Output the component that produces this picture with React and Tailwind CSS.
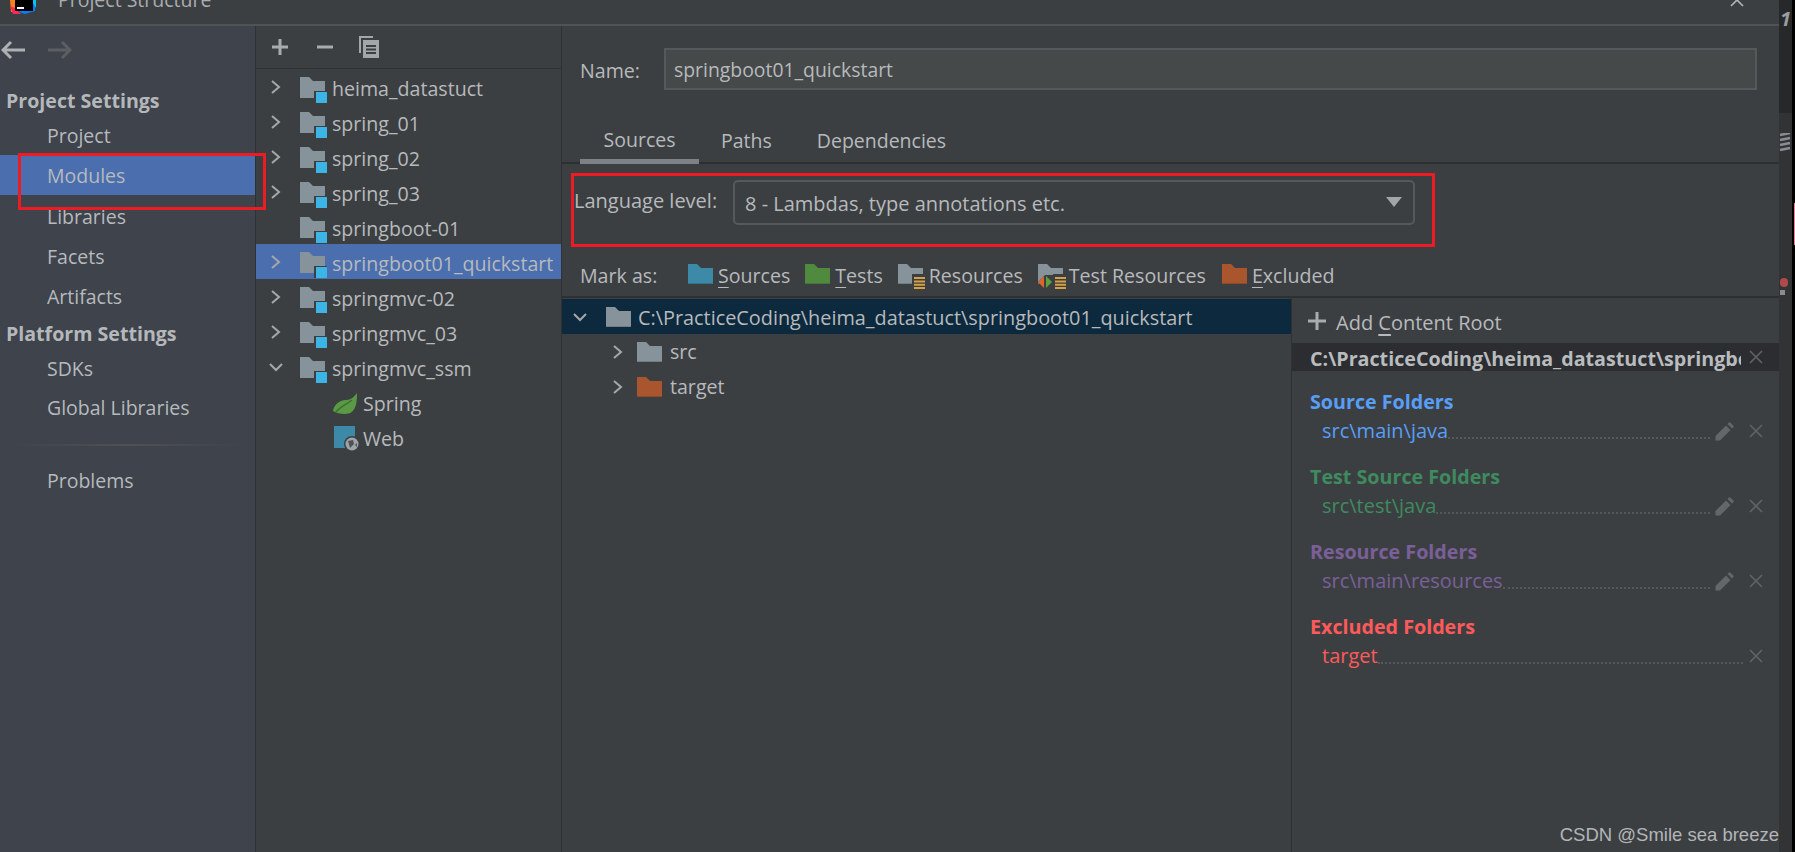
import React from "react";

const T = "#b7babc";

function Folder({ color = "#87939a", className = "" }) {
  return (
    <svg width="25" height="20" viewBox="0 0 25 20" className={`shrink-0 ${className}`}>
      <path d="M0 0H9L13 4H25V20H0Z" fill={color} />
      <path d="M0 19H25V20H0Z" fill="#000" opacity="0.15" />
    </svg>
  );
}

function Module() {
  return (
    <svg width="27" height="26" viewBox="0 0 27 26" className="mt-[6px] shrink-0">
      <path d="M0 0H9L13 4H25V21H0Z" fill="#87939a" />
      <path d="M14 14H27V26H14Z" fill="#3c3f42" />
      <path d="M16 15H27V26H16Z" fill="#3cb5e6" />
    </svg>
  );
}

function Chev({ open }) {
  return (
    <svg width="14" height="16" viewBox="0 0 14 16" className="shrink-0">
      <path d={open ? "M1 5L7 11L13 5" : "M3 2L10 8L3 14"} fill="none" stroke="#a5a8aa" strokeWidth="2" />
    </svg>
  );
}

function Close({ color = "#5f6366" }) {
  return (
    <svg width="16" height="16" viewBox="0 0 16 16" className="shrink-0">
      <path d="M2 2L14 14M14 2L2 14" stroke={color} strokeWidth="1.7" />
    </svg>
  );
}

function Pencil() {
  return (
    <svg width="19" height="19" viewBox="0 0 19 19" className="shrink-0">
      <path d="M0.5 18.5V14L11 3.5L15.5 8L5 18.5Z M12.5 2L14 0.5Q14.6 0 15.2 0.5L18.5 3.8Q19 4.4 18.5 5L17 6.5Z" fill="#63676a" />
    </svg>
  );
}

function ResLines() {
  return (
    <svg width="13" height="15" viewBox="0 0 13 15" className="absolute right-[-2px] bottom-[-5px]">
      <rect x="0" y="0" width="13" height="15" fill="#3c3f42" />
      <path d="M2 3H13V5H2ZM2 6.4H13V8.4H2ZM2 9.8H13V11.8H2ZM2 13H13V15H2Z" fill="#d5a046" />
    </svg>
  );
}

function TreeRow({ label, open, leaf, selected }) {
  return (
    <div className={`flex h-[35px] items-center pl-[13px] text-[19.6px] ${selected ? "bg-[#4b6eaf]" : ""}`}>
      <div className="w-[31px] shrink-0">{!leaf && <Chev open={open} />}</div>
      <Module />
      <span className="ml-[5px] mt-[4px] whitespace-nowrap">{label}</span>
    </div>
  );
}

function Mark({ icon, letter, rest, ml, tl = "5px" }) {
  return (
    <div className="flex items-center" style={{ marginLeft: ml }}>
      {icon}
      <span className="mt-[4px] whitespace-nowrap" style={{ marginLeft: tl }}>
        {letter && <span className="underline underline-offset-[4px]">{letter}</span>}
        {rest}
      </span>
    </div>
  );
}

function PathRow({ title, path, color, editable = true }) {
  return (
    <div className="h-[75px] pl-[18px]" style={{ color }}>
      <div className="flex h-[30px] items-center pt-[2px] text-[19.7px] font-bold">{title}</div>
      <div className="flex h-[30px] items-center pl-[12px]">
        <span className="text-[20px]">{path}</span>
        <div className="mr-[5px] h-[16px] flex-1 border-b-2 border-dotted border-[#55595c]" />
        {editable && <div className="mr-[14px]"><Pencil /></div>}
        <div className="mr-[15px]"><Close /></div>
      </div>
    </div>
  );
}

function SideItem({ children, h = "h-[40px]", selected }) {
  return (
    <div className={`flex ${h} items-center pl-[47px] pt-[2px] text-[19.5px] ${selected ? "bg-[#4b6eaf]" : ""}`}>{children}</div>
  );
}

export default function App() {
  return (
    <div
      className="relative flex h-[852px] w-[1795px] overflow-hidden bg-[#3c3f42] text-[19.6px]"
      style={{ fontFamily: '"Open Sans", "Noto Sans", sans-serif', color: T }}
    >
      <div className="flex w-[1779px] shrink-0 flex-col">
        {/* title bar */}
        <div className="relative flex h-[26px] shrink-0 items-start overflow-hidden border-b-2 border-[#505254] bg-[#3c3f41]">
          <svg width="28" height="14" viewBox="0 0 28 14" className="ml-[9px] shrink-0">
            <path d="M1 0H8L6 12H2Z" fill="#fc801d" />
            <path d="M1 6L4 14H12L6 8Z" fill="#fe2857" />
            <path d="M20 0H27L26 11L16 14L10 12Z" fill="#087cfa" />
            <path d="M22 0H27V8Z" fill="#07c3f2" />
            <rect x="6" y="0" width="18" height="11" fill="#000" />
            <rect x="8" y="7" width="7" height="2" fill="#fff" />
          </svg>
          <span className="ml-[21px] mt-[-14px] text-[19.5px] leading-[28px] text-[#a9adb0]">Project Structure</span>
          <div className="ml-auto mr-[34px] mt-[-8px]">
            <Close color="#b0b3b5" />
          </div>
        </div>

        <div className="flex min-h-0 flex-1">
          {/* sidebar */}
          <div className="w-[256px] shrink-0 border-r border-[#2f3133] bg-[#3e434c]">
            <div className="flex h-[48px] items-center pl-[1px]">
              <svg width="24" height="20" viewBox="0 0 24 20">
                <path d="M10 2L2 10L10 18M2 10H24" fill="none" stroke="#aeb1b3" strokeWidth="3" />
              </svg>
              <svg width="24" height="20" viewBox="0 0 24 20" className="ml-[23px]">
                <path d="M14 2L22 10L14 18M0 10H22" fill="none" stroke="#5c5f62" strokeWidth="3" />
              </svg>
            </div>
            <div className="mt-[12px] flex h-[29px] items-center pl-[6px] text-[19.6px] font-bold text-[#b5b8ba]">Project Settings</div>
            <SideItem>Project</SideItem>
            <SideItem selected>Modules</SideItem>
            <SideItem h="h-[41px]">Libraries</SideItem>
            <SideItem>Facets</SideItem>
            <SideItem>Artifacts</SideItem>
            <div className="flex h-[35px] items-center pl-[6px] text-[19.6px] font-bold text-[#b5b8ba]">Platform Settings</div>
            <SideItem h="h-[34px]">SDKs</SideItem>
            <SideItem h="h-[44px]">Global Libraries</SideItem>
            <div className="mx-[6px] mb-[16px] mt-[15px] h-[2px] bg-gradient-to-r from-[#3e434c] via-[#4f5154] to-[#3e434c]" />
            <SideItem h="h-[36px]">Problems</SideItem>
          </div>

          {/* modules list */}
          <div className="w-[306px] shrink-0 overflow-hidden border-r border-[#2f3133] bg-[#3c3f42]">
            <div className="flex h-[43px] items-center gap-[25px] border-b border-[#2f3133] pl-[14px]">
              <svg width="20" height="20" viewBox="0 0 20 20">
                <path d="M10 2V18M2 10H18" stroke="#a9acae" strokeWidth="3" />
              </svg>
              <svg width="20" height="20" viewBox="0 0 20 20">
                <path d="M2 10H18" stroke="#a9acae" strokeWidth="3" />
              </svg>
              <svg width="22" height="24" viewBox="0 0 22 24" className="ml-[-2px]">
                <path d="M1 1H15V3H3V18H1Z" fill="#a3a6a8" />
                <path d="M5 5H21V23H5Z" fill="#a3a6a8" />
                <path d="M8 10H18V12H8ZM8 13.5H18V15.5H8ZM8 17H18V19H8Z" fill="#3c3f42" />
              </svg>
            </div>
            <TreeRow label="heima_datastuct" />
            <TreeRow label="spring_01" />
            <TreeRow label="spring_02" />
            <TreeRow label="spring_03" />
            <TreeRow label="springboot-01" leaf />
            <TreeRow label="springboot01_quickstart" selected />
            <TreeRow label="springmvc-02" />
            <TreeRow label="springmvc_03" />
            <TreeRow label="springmvc_ssm" open />
            <div className="flex h-[35px] items-center pl-[76px]">
              <svg width="26" height="22" viewBox="0 0 26 22" className="mt-[4px] shrink-0">
                <path d="M25 0C25 10 24 21 13 21C8 21 4 20 1 18C2 12 7 7 14 7C19 7 22 4 25 0Z" fill="#5a9a45" />
                <path d="M4 19C9 13 15 11 20 7" fill="none" stroke="#3c6f32" strokeWidth="1.4" />
              </svg>
              <span className="ml-[5px] mt-[4px]">Spring</span>
            </div>
            <div className="flex h-[35px] items-center pl-[78px]">
              <svg width="26" height="26" viewBox="0 0 26 26" className="mt-[4px] shrink-0">
                <rect x="0" y="0" width="21" height="22" fill="#3d8aa8" />
                <circle cx="18" cy="18" r="8" fill="#3c3f42" />
                <circle cx="18" cy="18" r="6.5" fill="#9ea4a8" />
                <path d="M14 15L19 14L20 18L16 22ZM21 19L23 17V21Z" fill="#4d5256" />
              </svg>
              <span className="ml-[3px] mt-[4px]">Web</span>
            </div>
          </div>

          {/* details */}
          <div className="flex min-w-0 flex-1 flex-col">
            <div className="flex h-[64px] shrink-0 items-end pl-[18px]">
              <span className="mb-[5px] w-[84px]">Name:</span>
              <div className="mr-[22px] flex h-[42px] flex-1 items-center border-2 border-[#56595b] bg-[#45494a] pl-[8px] pt-[2px] text-[19.4px]">
                springboot01_quickstart
              </div>
            </div>
            <div className="mt-[24px] flex h-[50px] shrink-0 border-b-2 border-[#2d2f31] pl-[18px] text-[19.5px]">
              <div className="flex h-[50px] w-[119px] items-center justify-center border-b-[5px] border-[#7d8286] pt-[6px]">Sources</div>
              <div className="ml-[22px] flex h-[48px] items-center pt-[5px]">Paths</div>
              <div className="ml-[45px] flex h-[48px] items-center pt-[5px]">Dependencies</div>
            </div>
            <div className="flex h-[90px] shrink-0 items-start pl-[12px] pt-[16px] text-[20px]">
              <span className="mt-[6px] w-[159px] shrink-0">Language level:</span>
              <div className="flex h-[45px] w-[682px] items-center justify-between rounded-[5px] border-2 border-[#56595b] pl-[10px] pr-[11px] pt-[2px]">
                <span>8 - Lambdas, type annotations etc.</span>
                <svg width="16" height="10" viewBox="0 0 16 10" className="mt-[-4px]">
                  <path d="M0 0H16L8 10Z" fill="#a3a6a8" />
                </svg>
              </div>
            </div>
            <div className="flex h-[44px] shrink-0 items-center border-b-2 border-[#2d2f31] pb-[2px] pl-[18px]">
              <span className="mt-[4px] w-[108px] shrink-0">Mark as:</span>
              <Mark icon={<Folder color="#3d8aa8" />} letter="S" rest="ources" />
              <Mark icon={<Folder color="#4f8a3f" />} letter="T" rest="ests" ml="15px" />
              <Mark
                ml="15px"
                tl="6px"
                icon={<div className="relative h-[20px] w-[25px]"><Folder /><ResLines /></div>}
                rest="Resources"
              />
              <Mark
                ml="15px"
                tl="5px"
                icon={
                  <div className="relative h-[20px] w-[26px]">
                    <Folder />
                    <ResLines />
                    <svg width="15" height="14" viewBox="0 0 15 14" className="absolute bottom-[-5px] left-0">
                      <path d="M0 7L7 0H15L15 14H7Z" fill="#3c3f42" />
                      <path d="M6 1V13L0 7Z" fill="#e0652b" />
                      <path d="M8 1V13L14 7Z" fill="#5ba338" />
                    </svg>
                  </div>
                }
                rest="Test Resources"
              />
              <Mark icon={<Folder color="#a9562e" />} letter="E" rest="xcluded" ml="16px" />
            </div>

            <div className="flex min-h-0 flex-1">
              <div className="min-w-0 flex-1 border-r border-[#2f3133] pt-[1px]">
                <div className="flex h-[35px] items-center bg-[#0d293e] pl-[11px]">
                  <Chev open />
                  <Folder className="ml-[19px]" />
                  <span className="ml-[7px] mt-[2px] whitespace-nowrap text-[19.85px]">C:\PracticeCoding\heima_datastuct\springboot01_quickstart</span>
                </div>
                <div className="flex h-[35px] items-center pl-[49px]">
                  <Chev />
                  <Folder className="ml-[12px]" />
                  <span className="ml-[8px] mt-[1px]">src</span>
                </div>
                <div className="flex h-[35px] items-center pl-[49px]">
                  <Chev />
                  <Folder color="#a9562e" className="ml-[12px]" />
                  <span className="ml-[8px] mt-[1px]">target</span>
                </div>
              </div>
              <div className="w-[487px] shrink-0">
                <div className="flex h-[45px] items-center pl-[16px]">
                  <svg width="18" height="18" viewBox="0 0 18 18" className="shrink-0">
                    <path d="M9 0V18M0 9H18" stroke="#a9acae" strokeWidth="3" />
                  </svg>
                  <span className="ml-[10px] mt-[5px] text-[20px]">Add <span className="underline underline-offset-[4px]">C</span>ontent Root</span>
                </div>
                <div className="flex h-[28px] items-center bg-[#2b2d30] pl-[18px]">
                  <div className="min-w-0 flex-1 overflow-hidden whitespace-nowrap pt-[3px] text-[19.7px] font-bold leading-[26px] text-[#b9bcbe]">
                    C:\PracticeCoding\heima_datastuct\springboot01_quickstart
                  </div>
                  <div className="ml-[7px] mr-[15px]"><Close /></div>
                </div>
                <div className="mt-[15px]">
                  <PathRow title="Source Folders" path="src\main\java" color="#589df6" />
                  <PathRow title="Test Source Folders" path="src\test\java" color="#3f8a5f" />
                  <PathRow title="Resource Folders" path="src\main\resources" color="#7a5f99" />
                  <PathRow title="Excluded Folders" path="target" color="#ff5a5a" editable={false} />
                </div>
              </div>
            </div>
          </div>
        </div>
      </div>

      {/* strip of the window behind */}
      <div className="flex w-[13px] shrink-0 flex-col overflow-hidden bg-[#313335]">
        <div className="h-[113px] bg-[#26282a] pl-[1px] pt-[6px] text-[20px] font-bold italic leading-[26px] text-[#9a9c9e]">1</div>
        <svg width="13" height="22" viewBox="0 0 13 22" className="mt-[20px] shrink-0">
          <path d="M1 2L11 0M1 7L11 5M1 12L11 10M1 17L11 15" stroke="#8a8d8f" strokeWidth="2.5" />
        </svg>
        <div className="ml-[1px] mt-[123px] h-[9px] w-[8px] rounded-full bg-[#b04a4a]" />
        <div className="ml-[1px] mt-[3px] h-[5px] w-[5px] bg-[#8a8d8f]" />
      </div>
      <div className="w-[3px] shrink-0 bg-black">
        <div className="ml-[2px] mt-[203px] h-[42px] w-[1px] bg-[#e87fa0]" />
      </div>

      {/* annotations */}
      <div className="absolute left-[18px] top-[153px] h-[57px] w-[248px] border-[3px] border-[#ed1c24]" />
      <div className="absolute left-[571px] top-[173px] h-[74px] w-[864px] border-[3px] border-[#ed1c24]" />
      <div
        className="absolute right-[16px] top-[824px] text-[18.5px] leading-[22px] text-[#b3b5b7]"
        style={{ fontFamily: '"Liberation Sans", sans-serif' }}
      >
        CSDN @Smile sea breeze
      </div>
    </div>
  );
}
